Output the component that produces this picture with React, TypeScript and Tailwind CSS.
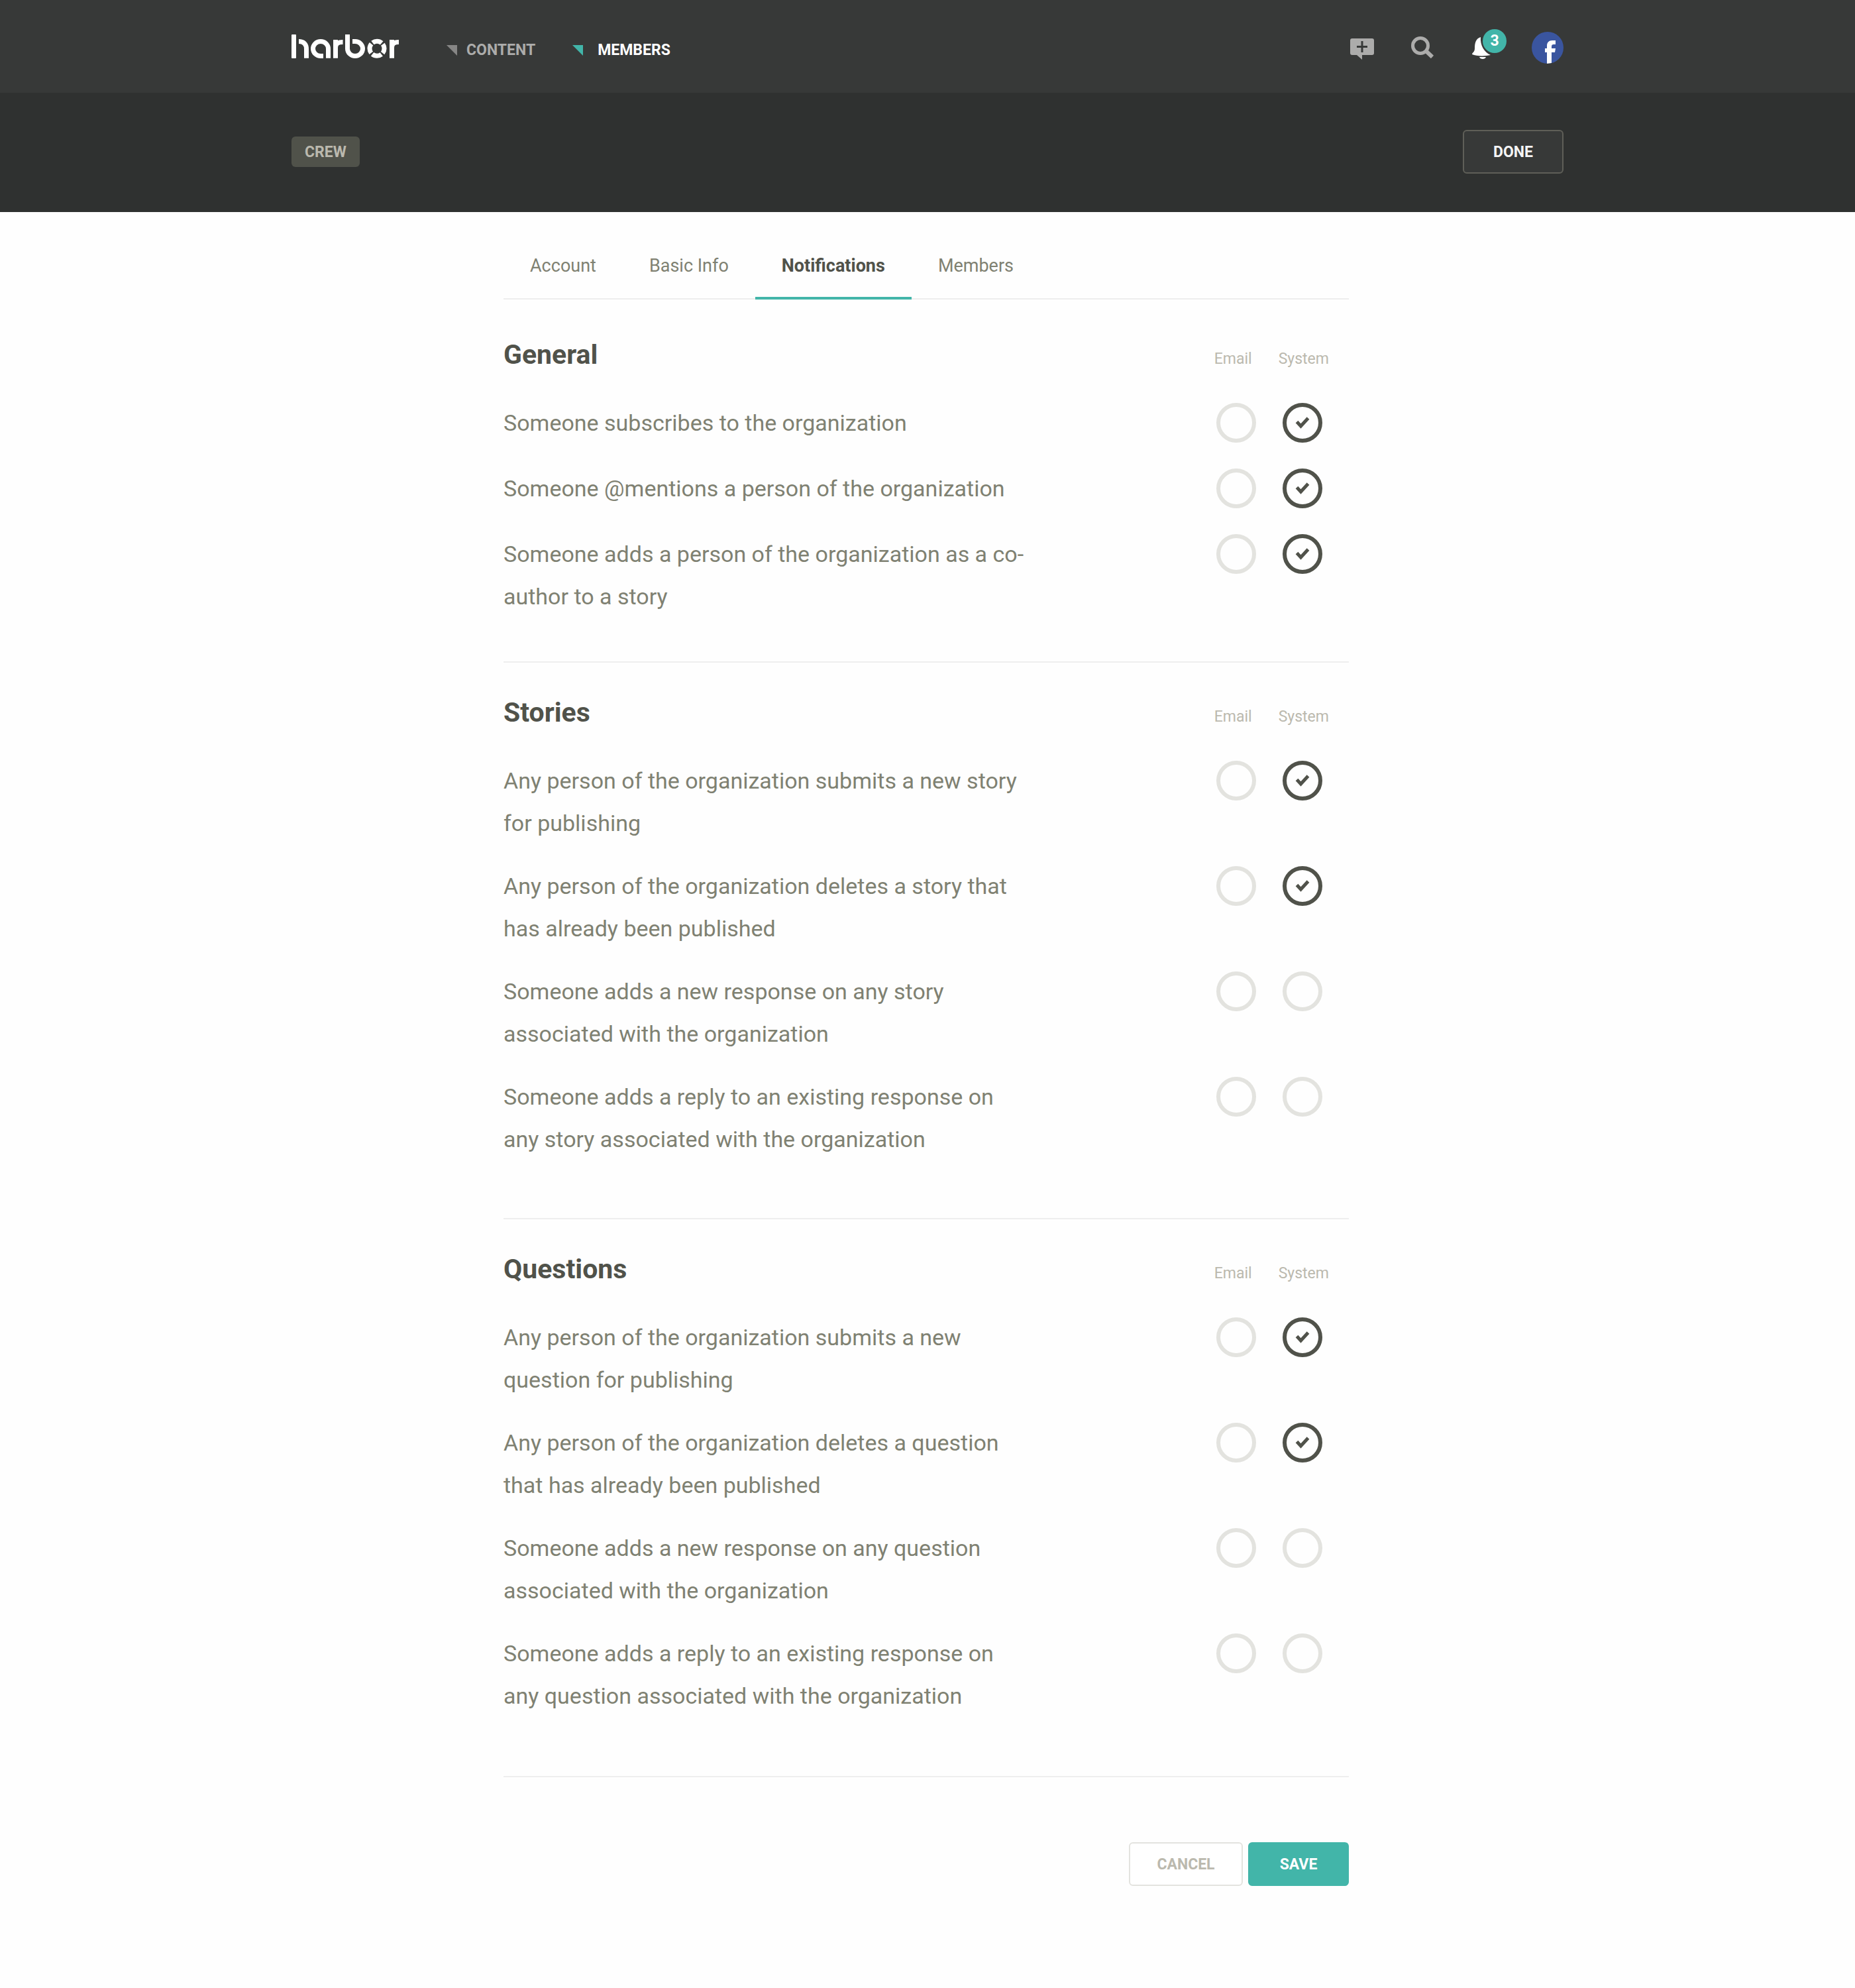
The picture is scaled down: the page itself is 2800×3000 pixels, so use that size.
import React from "react";

type Row = { label: string; email: boolean; system: boolean };
type Group = { title: string; spacing: string; bodyGap: string; rows: Row[] };

const groups: Group[] = [
  {
    title: "General",
    spacing: "pt-[42px] pb-[66px]",
    bodyGap: "gap-[35px]",
    rows: [
      { label: "Someone subscribes to the organization", email: false, system: true },
      { label: "Someone @mentions a person of the organization", email: false, system: true },
      { label: "Someone adds a person of the organization as a co-author to a story", email: false, system: true },
    ],
  },
  {
    title: "Stories",
    spacing: "pt-[34px] pb-[87px]",
    bodyGap: "gap-[31px]",
    rows: [
      { label: "Any person of the organization submits a new story for publishing", email: false, system: true },
      { label: "Any person of the organization deletes a story that has already been published", email: false, system: true },
      { label: "Someone adds a new response on any story associated with the organization", email: false, system: false },
      { label: "Someone adds a reply to an existing response on any story associated with the organization", email: false, system: false },
    ],
  },
  {
    title: "Questions",
    spacing: "pt-[34px] pb-[89px]",
    bodyGap: "gap-[31px]",
    rows: [
      { label: "Any person of the organization submits a new question for publishing", email: false, system: true },
      { label: "Any person of the organization deletes a question that has already been published", email: false, system: true },
      { label: "Someone adds a new response on any question associated with the organization", email: false, system: false },
      { label: "Someone adds a reply to an existing response on any question associated with the organization", email: false, system: false },
    ],
  },
];

function Logo() {
  return (
    <svg width="162" height="36" viewBox="0 0 162 36" fill="none" stroke="#fff" strokeWidth="7" role="img" aria-label="harbor">
      <rect x="0" y="0" width="7" height="36" rx="1" fill="#fff" stroke="none" />
      <path d="M11 10.500C18 10.500 22.500 14 22.500 22V35.700" />
      <path d="M55.500 35.700V21.500A11.500 11 0 1 0 44 32.500H48" />
      <path d="M66.500 35.700V8M66.500 20C66.500 14 70 11.500 77.500 11.500" />
      <path d="M84.500 0V21.500A11.500 11 0 1 0 96 10.500H92" />
      <circle cx="129" cy="21.300" r="11" strokeDasharray="14.780 2.500" strokeDashoffset="7.390" />
      <path d="M151.500 35.700V8M151.500 20C151.500 14 155 11.500 162 11.500" />
    </svg>
  );
}

function Corner({ className }: { className: string }) {
  return (
    <svg width="16" height="16" viewBox="0 0 16 16" className={className} aria-hidden="true">
      <path d="M0 0H16V16Z" fill="currentColor" />
    </svg>
  );
}

function Check({ label, checked }: { label: string; checked: boolean }) {
  return (
    <label className="relative mt-0.5 block size-[60px] shrink-0 cursor-pointer">
      <input
        type="checkbox"
        defaultChecked={checked}
        aria-label={label}
        className="peer block size-[60px] cursor-pointer appearance-none rounded-full border-[6px] border-[#e3e3df] checked:border-[#50524a]"
      />
      <svg viewBox="0 0 60 60" className="pointer-events-none absolute inset-0 hidden size-[60px] peer-checked:block" aria-hidden="true">
        <path d="M21.500 28.500L27.500 35L38.500 23" fill="none" stroke="#50524a" strokeWidth="5" />
      </svg>
    </label>
  );
}

function Section({ group }: { group: Group }) {
  return (
    <section className={`border-b-2 border-[#eeeeee] ${group.spacing}`}>
      <div className="mb-7 flex h-[84px] items-center justify-between pr-[30px]">
        <h2 className="text-[41px] font-bold text-[#50524a]">{group.title}</h2>
        <div className="flex gap-10 pt-3 text-[23px] text-[#bbb9ae]">
          <span>Email</span>
          <span>System</span>
        </div>
      </div>
      <ul className={`flex flex-col ${group.bodyGap}`}>
        {group.rows.map((row) => (
          <li key={row.label} className="flex items-start justify-between pr-10">
            <p className="max-w-[800px] text-[34px] leading-[64px] text-[#7f8172]">{row.label}</p>
            <div className="flex gap-10">
              <Check label={`${row.label}: email`} checked={row.email} />
              <Check label={`${row.label}: system`} checked={row.system} />
            </div>
          </li>
        ))}
      </ul>
    </section>
  );
}

const tabs = [
  { name: "Account", active: false },
  { name: "Basic Info", active: false },
  { name: "Notifications", active: true },
  { name: "Members", active: false },
];

export default function App() {
  return (
    <div className="min-h-screen bg-[#fefefe] font-['Roboto',sans-serif]">
      <header className="bg-[#373938]">
        <div className="mx-auto flex h-[140px] max-w-[1920px] items-center justify-between">
          <div className="flex items-center">
            <a href="#" className="block"><Logo /></a>
            <nav className="mt-3 ml-[72px] flex items-center gap-14 text-[23px] font-bold">
              <a href="#content" className="flex items-center gap-3.5 text-[#acacab]">
                <Corner className="text-[#868685]" />CONTENT
              </a>
              <a href="#members" className="flex items-center gap-[22px] text-white">
                <Corner className="text-[#42b5a9]" />MEMBERS
              </a>
            </nav>
          </div>
          <div className="mt-1 flex items-center">
            <button type="button" aria-label="New post" className="text-[#acacab]">
              <svg width="36" height="36" viewBox="0 0 36 36">
                <path fillRule="evenodd" fill="currentColor" d="M3 4H33A3 3 0 0 1 36 7V26A3 3 0 0 1 33 29H18V36L10 29H3A3 3 0 0 1 0 26V7A3 3 0 0 1 3 4ZM16.500 8V15H10V18H16.500V25H19.500V18H26V15H19.500V8Z" />
              </svg>
            </button>
            <button type="button" aria-label="Search" className="ml-14 text-[#acacab]">
              <svg width="36" height="36" viewBox="0 0 36 36" fill="none" stroke="currentColor">
                <circle cx="14" cy="15" r="11.500" strokeWidth="5" />
                <path d="M22.500 23L32 32" strokeWidth="6" />
              </svg>
            </button>
            <button type="button" aria-label="Notifications" className="relative ml-14">
              <svg width="36" height="36" viewBox="0 0 36 36" fill="#fff">
                <path d="M13 2C12 14 18 25 28 29C20 31 6 31 0 28C0 25 4 25 4 19C4 10 6 4 13 2Z" />
                <path d="M11 32H21C20 36 12 36 11 32Z" />
              </svg>
              <span className="absolute -top-2.5 left-4 flex size-9 items-center justify-center rounded-full bg-[#42b5a9] text-[23px] font-bold text-white">3</span>
            </button>
            <a href="#profile" aria-label="Profile" className="ml-[54px] block">
              <svg width="48" height="48" viewBox="0 0 48 48">
                <circle cx="24" cy="24" r="24" fill="#3a559f" />
                <path d="M23 48V31H20V25H23V21C23 16 26 13 31 13H36V19H33C31 19 30 20 30 22V25H36L35 31H30V47Z" fill="#fff" />
              </svg>
            </a>
          </div>
        </div>
      </header>
      <div className="bg-[#2f3130]">
        <div className="mx-auto flex h-[180px] max-w-[1920px] items-center justify-between pb-0.5">
          <span className="flex h-[46px] items-center rounded-md bg-[#50524a] px-5 pt-0.5 text-[23px] font-bold text-[#bbb9ae]">CREW</span>
          <button type="button" className="h-[66px] w-[152px] rounded-md border-2 border-[#5f5f58] bg-[#373938] pt-0.5 text-[23px] font-bold text-[#f5f5f5]">DONE</button>
        </div>
      </div>
      <main className="mx-auto w-full max-w-[1280px] pr-1">
        <nav className="flex h-[132px] border-b-2 border-[#eeeeee] text-[27px]">
          {tabs.map((tab) => (
            <a
              key={tab.name}
              href="#"
              className={
                tab.active
                  ? "-mb-0.5 flex items-center border-b-4 border-[#42b5a9] px-10 pt-[34px] font-bold text-[#50524a]"
                  : "flex items-center px-10 pt-8 text-[#7f8172]"
              }
            >
              {tab.name}
            </a>
          ))}
        </nav>
        {groups.map((group) => (
          <Section key={group.title} group={group} />
        ))}
        <div className="flex justify-end gap-2 pt-[98px] pb-[152px]">
          <button type="button" className="h-[66px] w-[172px] rounded-md border-2 border-[#e3e3df] bg-white pt-0.5 text-[23px] font-bold text-[#bbb9ae]">CANCEL</button>
          <button type="button" className="h-[66px] w-[152px] rounded-md bg-[#42b5a9] pt-0.5 text-[23px] font-bold text-white">SAVE</button>
        </div>
      </main>
    </div>
  );
}
